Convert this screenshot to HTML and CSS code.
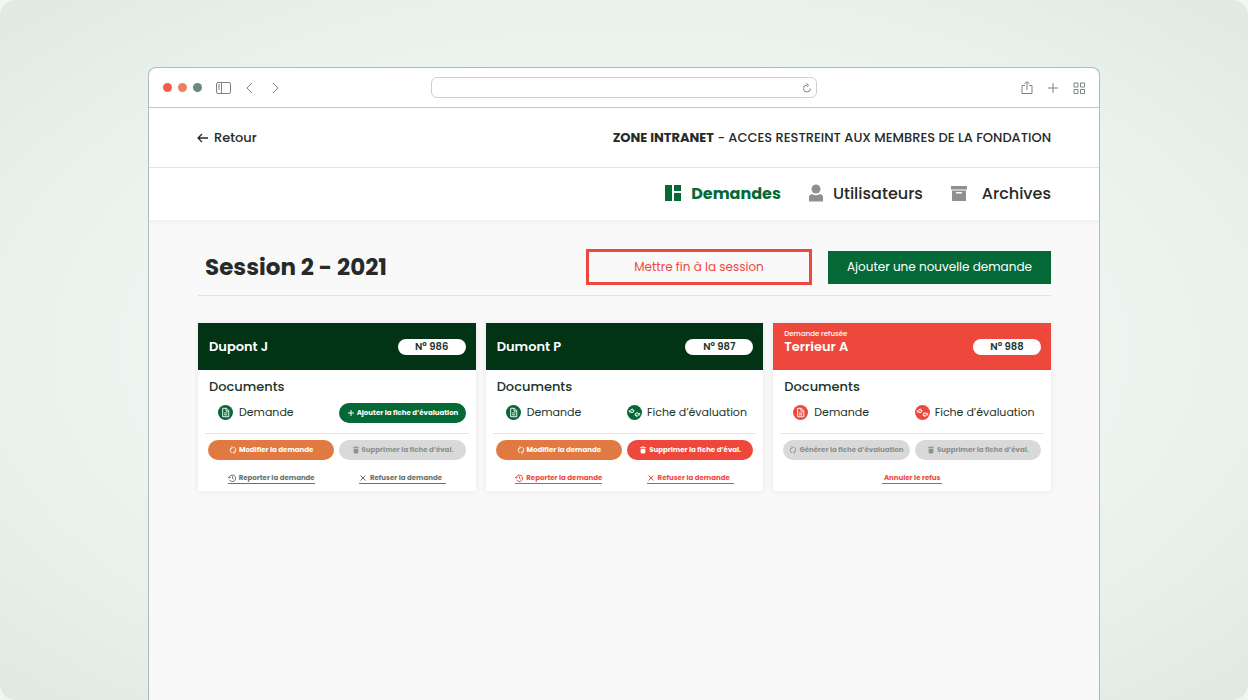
FILE: index.html
```html
<!DOCTYPE html>
<html lang="fr">

<head>
  <meta charset="utf-8">
  <meta name="viewport" content="width=device-width, initial-scale=1">
  <title>Demandes - Zone intranet</title>
  <link rel="stylesheet" href="styles.css">
</head>

<body>

  <!-- shared icons -->
  <svg class="sprite" aria-hidden="true">
    <symbol id="doc" viewBox="0 0 16 16">
      <path d="M5 3.500h4l2.500 2.500v6.500h-6.500z M8.500 3.500v3h3 M6.500 8.500h3.500 M6.500 10.500h3.500" />
    </symbol>
    <symbol id="thumbs" viewBox="0 0 16 16">
      <path d="M2.500 5.500v2.500 M4 5.500v2.500h2.500l1-2.500h-2v-1.500z M13.500 8.500v2.500 M12 11v-2.500h-2.500l-1 2.500h2v1.500z" />
    </symbol>
    <symbol id="refresh" viewBox="0 0 16 16">
      <path d="M5.500 13.500a6 6 0 0 1-1-9.500l2-1 M5 .5l2.500 2.500-2.500 2.500 M10.500 2.500a6 6 0 0 1 1 9.500l-2 1 M11 15.500l-2.500-2.500 2.500-2.500" />
    </symbol>
    <symbol id="trash" viewBox="0 0 16 16">
      <path d="M2 3.500h12 M5.500 2h5" />
      <path d="M4 7h8l-.5 7h-7z" fill="currentColor" />
    </symbol>
    <symbol id="history" viewBox="0 0 16 16">
      <path d="M3 11.500a6.500 6.500 0 1 0-.5-4.500 M0 6l2.500 2.500 2.500-2.500 M9 4.500v4l2.500 1.500" />
    </symbol>
    <symbol id="cross" viewBox="0 0 16 16">
      <path d="M3 3l10 10 M13 3l-10 10" />
    </symbol>
    <symbol id="plus" viewBox="0 0 16 16">
      <path d="M8 2v12 M2 8h12" />
    </symbol>
  </svg>

  <div class="window">

    <div class="toolbar">
      <div class="toolbar-left">
        <span class="dot red"></span>
        <span class="dot orange"></span>
        <span class="dot green"></span>
        <button class="tool sidebar" aria-label="Barre latérale">
          <svg width="15" height="12" viewBox="0 0 15 12"><path d="M.5 2a1.500 1.500 0 0 1 1.500-1.500h11a1.500 1.500 0 0 1 1.500 1.500v8a1.500 1.500 0 0 1-1.500 1.500h-11a1.500 1.500 0 0 1-1.500-1.500z M5.500.5v11 M2 3h2 M2 5h2 M2 7h2" /></svg>
        </button>
        <button class="tool prev" aria-label="Précédent">
          <svg width="7" height="12" viewBox="0 0 7 12"><path d="M6 1l-5 5 5 5" /></svg>
        </button>
        <button class="tool next" aria-label="Suivant">
          <svg width="7" height="12" viewBox="0 0 7 12"><path d="M1 1l5 5-5 5" /></svg>
        </button>
      </div>
      <div class="address">
        <input type="text" aria-label="Adresse">
        <button class="tool" aria-label="Recharger">
          <svg width="10" height="10" viewBox="0 0 10 10"><path d="M5 2a3.500 3.500 0 1 0 3.500 3.500 M4.500.5l2 1.500-1.500 2" /></svg>
        </button>
      </div>
      <div class="toolbar-right">
        <button class="tool" aria-label="Partager">
          <svg width="12" height="14" viewBox="0 0 12 14"><path d="M4 4.500h-3v8h10v-8h-3 M6 9v-8 M3.500 3l2.500-2.500 2.500 2.500" /></svg>
        </button>
        <button class="tool" aria-label="Nouvel onglet">
          <svg width="10" height="10" viewBox="0 0 10 10"><path d="M5 0v10 M0 5h10" /></svg>
        </button>
        <button class="tool" aria-label="Onglets">
          <svg width="12" height="12" viewBox="0 0 12 12"><path d="M1 1h4v4h-4z M7.500 1h4v4h-4z M1 7.500h4v4h-4z M7.500 7.500h4v4h-4z" /></svg>
        </button>
      </div>
    </div>

    <header class="topbar">
      <a class="back" href="#">
        <svg width="11" height="10" viewBox="0 0 11 10"><path d="M11 5h-10 M5 1l-4 4 4 4" /></svg>
        Retour
      </a>
      <p><strong>ZONE INTRANET</strong> - ACCES RESTREINT AUX MEMBRES DE LA FONDATION</p>
    </header>

    <nav class="menu">
      <a class="active" href="#">
        <svg width="16" height="16" viewBox="0 0 16 16"><path d="M0 0h7v16h-7z M9 0h7v6h-7z M9 8h7v8h-7z" /></svg>
        Demandes
      </a>
      <a class="users" href="#">
        <svg width="14" height="18" viewBox="0 0 14 18"><circle cx="7" cy="5" r="4.500" /><path d="M0 17.500v-4q0-3 3-3.500 4 2.500 8 0 3 .5 3 3.500v4z" /></svg>
        Utilisateurs
      </a>
      <a class="archives" href="#">
        <svg width="16" height="15" viewBox="0 0 16 15"><path d="M0 0h16v3.500h-16z" /><path fill-rule="evenodd" d="M1 4.500h14v10.500h-14z M5 6v1.500h6v-1.500z" /></svg>
        Archives
      </a>
    </nav>

    <main>
      <div class="session">
        <h1>Session 2 - 2021</h1>
        <button class="btn btn-outline">Mettre fin à la session</button>
        <button class="btn btn-green">Ajouter une nouvelle demande</button>
      </div>

      <div class="cards">

        <article class="card">
          <div class="card-head">
            <h2>Dupont J</h2>
            <span class="number">N° 986</span>
          </div>
          <h3>Documents</h3>
          <div class="row docs">
            <a class="doc" href="#"><span class="round"><svg><use href="#doc" /></svg></span>Demande</a>
            <button class="pill green"><svg><use href="#plus" /></svg>Ajouter la fiche d’évaluation</button>
          </div>
          <div class="row actions">
            <button class="pill orange"><svg><use href="#refresh" /></svg>Modifier la demande</button>
            <button class="pill" disabled><svg><use href="#trash" /></svg>Supprimer la fiche d’éval.</button>
          </div>
          <div class="row links grey">
            <a href="#"><svg><use href="#history" /></svg>Reporter la demande</a>
            <a class="refuse" href="#"><svg><use href="#cross" /></svg>Refuser la demande</a>
          </div>
        </article>

        <article class="card">
          <div class="card-head">
            <h2>Dumont P</h2>
            <span class="number">N° 987</span>
          </div>
          <h3>Documents</h3>
          <div class="row docs">
            <a class="doc" href="#"><span class="round"><svg><use href="#doc" /></svg></span>Demande</a>
            <a class="doc eval" href="#"><span class="round"><svg><use href="#thumbs" /></svg></span>Fiche d’évaluation</a>
          </div>
          <div class="row actions">
            <button class="pill orange"><svg><use href="#refresh" /></svg>Modifier la demande</button>
            <button class="pill red"><svg><use href="#trash" /></svg>Supprimer la fiche d’éval.</button>
          </div>
          <div class="row links">
            <a href="#"><svg><use href="#history" /></svg>Reporter la demande</a>
            <a class="refuse" href="#"><svg><use href="#cross" /></svg>Refuser la demande</a>
          </div>
        </article>

        <article class="card refused">
          <div class="card-head">
            <div>
              <p>Demande refusée</p>
              <h2>Terrieur A</h2>
            </div>
            <span class="number">N° 988</span>
          </div>
          <h3>Documents</h3>
          <div class="row docs">
            <a class="doc" href="#"><span class="round"><svg><use href="#doc" /></svg></span>Demande</a>
            <a class="doc eval" href="#"><span class="round"><svg><use href="#thumbs" /></svg></span>Fiche d’évaluation</a>
          </div>
          <div class="row actions">
            <button class="pill" disabled><svg><use href="#refresh" /></svg>Générer la fiche d’évaluation</button>
            <button class="pill" disabled><svg><use href="#trash" /></svg>Supprimer la fiche d’éval.</button>
          </div>
          <div class="links single">
            <a href="#">Annuler le refus</a>
          </div>
        </article>

      </div>
    </main>

  </div>

</body>

</html>
```
FILE: styles.css
```css
* {
  box-sizing: border-box;
}

html {
  background: #f0f7f3;
}

body {
  display: flex;
  flex-direction: column;
  min-height: 100vh;
  margin: 0;
  padding: 67px 148px 0;
  border-radius: 16px;
  background: radial-gradient(ellipse at center, #f1f6f3 45%, #e8f1ec 72%, #e0e9e4 98%);
  color: #262a28;
  font-family: Poppins, Inter, sans-serif;
}

h1, h2, h3, p {
  margin: 0;
}

a {
  color: inherit;
  text-decoration: none;
}

button {
  padding: 0;
  border: 0;
  font-family: inherit;
  cursor: pointer;
}

svg {
  flex: none;
}

.sprite {
  display: none;
}

.window {
  display: flex;
  flex: 1;
  flex-direction: column;
  overflow: hidden;
  border: 1px solid #b4bab7;
  border-bottom: 0;
  border-radius: 8px 8px 0 0;
  background: #fff;
}

/* browser toolbar */
.toolbar {
  display: grid;
  grid-template-columns: 1fr 386px 1fr;
  align-items: center;
  height: 40px;
  padding: 0 14px;
  border-bottom: 1px solid #c3c5c4;
}

.toolbar-left,
.toolbar-right {
  display: flex;
  align-items: center;
}

.toolbar-left {
  gap: 6px;
}

.toolbar-right {
  justify-content: flex-end;
  gap: 15px;
}

.dot {
  width: 9px;
  height: 9px;
  border-radius: 50%;
}

.dot.red {
  background: #ee6148;
}

.dot.orange {
  background: #ee8062;
}

.dot.green {
  background: #6c8a79;
}

.tool {
  display: flex;
  background: none;
}

.tool svg {
  fill: none;
  stroke: #7b8681;
}

.sidebar {
  margin-left: 8px;
}

.prev {
  margin-left: 9px;
}

.next {
  margin-left: 13px;
}

.address {
  display: flex;
  align-items: center;
  height: 21px;
  padding: 0 4px;
  border: 1px solid #cdd0cf;
  border-radius: 6px;
}

.address input {
  flex: 1;
  min-width: 0;
  border: 0;
  outline: none;
  background: none;
}

/* page header */
.topbar {
  display: flex;
  align-items: center;
  justify-content: space-between;
  height: 60px;
  padding: 0 48px;
  border-bottom: 1px solid #e2e2e2;
  font-size: 13px;
  font-weight: 500;
}

.topbar strong {
  font-weight: 700;
}

.back {
  display: flex;
  align-items: center;
  gap: 6px;
}

.back svg {
  fill: none;
  stroke: #262a28;
  stroke-width: 1.300;
}

.menu {
  display: flex;
  align-items: center;
  justify-content: flex-end;
  gap: 28px;
  height: 52px;
  padding: 0 48px 2px;
  font-size: 16px;
  font-weight: 500;
}

.menu a {
  display: flex;
  align-items: center;
  gap: 10px;
}

.menu svg {
  fill: #8b918e;
}

.menu .active {
  color: #046937;
  font-weight: 700;
}

.menu .active svg {
  fill: #046937;
}

.menu .archives {
  gap: 15px;
}

main {
  flex: 1;
  padding: 29px 48px 28px 49px;
  background: #f9f9f9;
  box-shadow: inset 0 4px 4px -2px #f0f0f0;
}

.session {
  display: flex;
  align-items: center;
  gap: 16px;
  padding: 0 0 10px 7px;
  border-bottom: 1px solid #e2e2e2;
}

h1 {
  flex: 1;
  font-size: 23px;
  font-weight: 700;
  line-height: 36px;
}

.btn {
  height: 33px;
  font-size: 12px;
}

.btn-outline {
  width: 226px;
  height: 36px;
  border: 3px solid #ee483d;
  background: none;
  color: #ee483d;
}

.btn-green {
  width: 223px;
  background: #046937;
  color: #fff;
}

/* request cards */
.cards {
  display: grid;
  grid-template-columns: repeat(3, 1fr);
  gap: 10px;
  margin-top: 27px;
}

.card {
  background: #fff;
  box-shadow: 0 0 6px rgba(0, 0, 0, .08);
  color: #20342a;
}

.card-head {
  display: flex;
  align-items: center;
  justify-content: space-between;
  height: 47px;
  padding: 0 10px 0 11px;
  background: #023315;
  color: #fff;
}

.card-head h2 {
  font-size: 13px;
  font-weight: 600;
  line-height: 16px;
}

.card-head p {
  font-size: 7px;
  font-weight: 500;
  line-height: 10px;
}

.card-head div {
  padding-bottom: 10px;
}

.number {
  width: 68px;
  border-radius: 8px;
  background: #fff;
  color: #20342a;
  font-size: 10px;
  font-weight: 600;
  line-height: 16px;
  text-align: center;
}

.card h3 {
  padding: 8px 11px 6px;
  font-size: 13px;
  font-weight: 500;
  line-height: 18px;
}

.row {
  display: grid;
  grid-template-columns: 1fr 1fr;
  gap: 5px;
  align-items: center;
}

.docs {
  height: 32px;
  margin: 0 7px;
  padding: 0 3px 10px;
  border-bottom: 1px solid #e4e7e5;
}

.doc {
  display: flex;
  align-items: center;
  gap: 6px;
  padding-left: 10px;
  font-size: 11px;
}

.doc.eval {
  gap: 5px;
  padding-left: 0;
}

.round {
  display: flex;
  width: 15px;
  height: 15px;
  border-radius: 50%;
  background: #046937;
}

.round svg {
  width: 15px;
  height: 15px;
  fill: none;
  stroke: #fff;
}

.pill {
  display: flex;
  align-items: center;
  justify-content: center;
  gap: 2px;
  height: 20px;
  border-radius: 10px;
  background: #d9d9d9;
  color: #8b918e;
  font-size: 7px;
  font-weight: 700;
  white-space: nowrap;
}

.pill svg,
.links svg {
  width: 8px;
  height: 8px;
  fill: none;
  stroke: currentColor;
  stroke-width: 2;
}

.pill.green {
  background: #046937;
  color: #fff;
}

.pill.orange {
  background: #e07a42;
  color: #fff;
}

.pill.red {
  background: #ee483d;
  color: #fff;
}

.actions {
  padding: 6px 10px 0;
}

.links {
  justify-items: center;
  padding: 13px 10px 7px;
  color: #ee483d;
  font-size: 7px;
  font-weight: 700;
  line-height: 10px;
}

.links.grey {
  color: #66736c;
}

.links a {
  display: flex;
  align-items: center;
  gap: 3px;
  border-bottom: 1px solid currentColor;
}

.links .refuse {
  padding: 0 4px 0 0;
}

.links.single {
  display: flex;
  justify-content: center;
}

.links.single a {
  padding: 0 2px;
}

.refused .card-head,
.refused .round {
  background: #ee483d;
}
```
